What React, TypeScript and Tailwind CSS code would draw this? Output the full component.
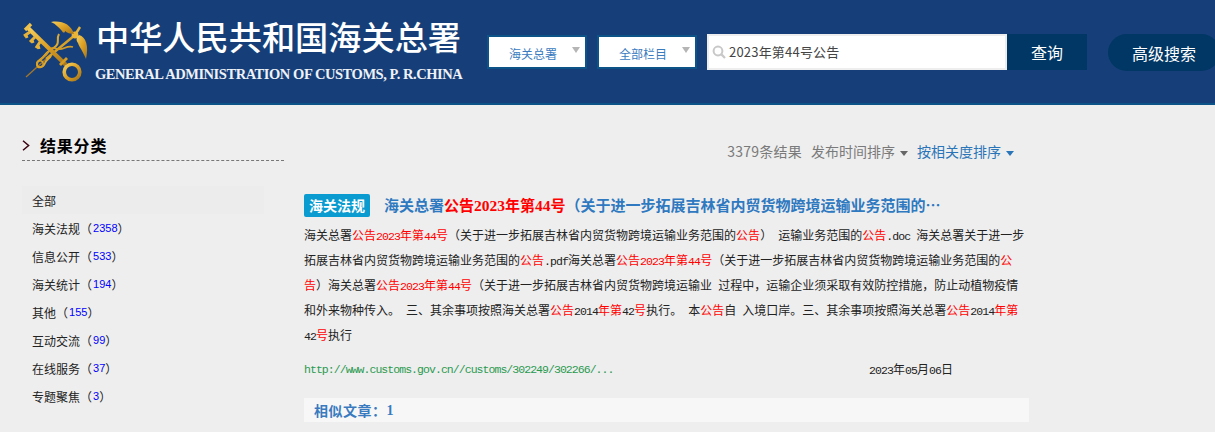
import React from "react";

const cjk = '"Noto Sans CJK SC", sans-serif';

const categories = [
  { name: "海关法规", count: "2358" },
  { name: "信息公开", count: "533" },
  { name: "海关统计", count: "194" },
  { name: "其他", count: "155" },
  { name: "互动交流", count: "99" },
  { name: "在线服务", count: "37" },
  { name: "专题聚焦", count: "3" },
];

// [text, isRed] per run, one entry per rendered line
const snippet: [string, boolean][][] = [
  [
    ["海关总署", false],
    ["公告2023年第44号", true],
    ["（关于进一步拓展吉林省内贸货物跨境运输业务范围的", false],
    ["公告", true],
    ["） 运输业务范围的", false],
    ["公告", true],
    [".doc 海关总署关于进一步", false],
  ],
  [
    ["拓展吉林省内贸货物跨境运输业务范围的", false],
    ["公告", true],
    [".pdf海关总署", false],
    ["公告2023年第44号", true],
    ["（关于进一步拓展吉林省内贸货物跨境运输业务范围的", false],
    ["公", true],
  ],
  [
    ["告", true],
    ["）海关总署", false],
    ["公告2023年第44号", true],
    ["（关于进一步拓展吉林省内贸货物跨境运输业 过程中，运输企业须采取有效防控措施，防止动植物疫情", false],
  ],
  [
    ["和外来物种传入。 三、其余事项按照海关总署", false],
    ["公告", true],
    ["2014", false],
    ["年第", true],
    ["42", false],
    ["号", true],
    ["执行。 本", false],
    ["公告", true],
    ["自 入境口岸。三、其余事项按照海关总署", false],
    ["公告", true],
    ["2014", false],
    ["年第", true],
  ],
  [
    ["42", false],
    ["号", true],
    ["执行", false],
  ],
];

// ascii runs are drawn in a narrow mono so they keep the 6px advance of the original
function Mixed({ text }: { text: string }) {
  const parts = text.split(/([\x20-\x7e]+)/).filter(Boolean);
  return (
    <>
      {parts.map((part, i) =>
        /^[\x20-\x7e]+$/.test(part) ? (
          <span
            key={i}
            className="whitespace-pre text-[11.5px] tracking-[-0.9px] font-['Liberation_Mono',monospace]"
          >
            {part}
          </span>
        ) : (
          <span key={i}>{part}</span>
        )
      )}
    </>
  );
}

function Caret({ color }: { color: string }) {
  return (
    <span
      className={`inline-block h-0 w-0 border-x-[4px] border-t-[5px] border-x-transparent ${color}`}
    />
  );
}

function KeyLogo() {
  return (
    <svg width="80" height="75" viewBox="0 0 80 75" className="shrink-0">
      <defs>
        <linearGradient id="gold" x1="0" y1="0" x2="1" y2="1">
          <stop offset="0" stopColor="#f6cf5c" />
          <stop offset="0.5" stopColor="#dca025" />
          <stop offset="1" stopColor="#a8761a" />
        </linearGradient>
      </defs>
      {/* staff */}
      <path d="M60 20 L31 44" stroke="#d9a227" strokeWidth="2.4" fill="none" />
      <path d="M31 44 L11 62" stroke="#a5762c" strokeWidth="1.3" fill="none" />
      <circle cx="60" cy="20" r="3.4" fill="#e8b53a" />
      <path d="M60 20 L65 12" stroke="#e8b53a" strokeWidth="2.4" fill="none" />
      {/* wings */}
      <path
        d="M36 7 C46 5 56 9 59 19 C55 19 52 18 50 16 C50 18 48 18 47 16 C44 13 41 9 36 7 Z"
        fill="url(#gold)"
      />
      <path
        d="M64 20 C71 22 74 31 71 44 C69 39 68 38 66 34 C65 32 64 31 63 28 C61 25 61 23 64 20 Z"
        fill="url(#gold)"
      />
      {/* snakes */}
      <path
        d="M44 19 C41 24 45 28 41 31 C37 35 32 36 29 41 C27 45 22 45 22 49 C22 54 28 53 30 48 C31 45 34 44 36 41"
        stroke="#e0aa2e"
        strokeWidth="2"
        fill="none"
      />
      <path
        d="M58 32 C52 30 48 35 44 34 C39 34 37 31 34 36 C32 40 28 42 25 45"
        stroke="#d59c25"
        strokeWidth="1.8"
        fill="none"
      />
      <circle cx="25" cy="49" r="3.2" stroke="#d9a227" strokeWidth="1.5" fill="none" />
      {/* key */}
      <path d="M13 13 L51 50" stroke="url(#gold)" strokeWidth="4.2" fill="none" />
      <path d="M10 15 L16 9" stroke="#eec04c" strokeWidth="3.4" fill="none" />
      <path
        d="M15 17 L9 21 M11 20 L12 23 M20 22 L15 27 M17 25 L18 28 M25 27 L21 33 M23 30 L24 34"
        stroke="#e5b33c"
        strokeWidth="3"
        fill="none"
      />
      <circle cx="57" cy="57" r="7.8" stroke="url(#gold)" strokeWidth="3.6" fill="none" />
      <path d="M45 50 L52 43" stroke="#d59c25" strokeWidth="2.8" fill="none" />
    </svg>
  );
}

export default function App() {
  return (
    <div
      className="h-[432px] w-[1215px] overflow-hidden bg-[#eeeeee]"
      style={{ fontFamily: cjk }}
    >
      {/* header */}
      <div className="flex h-[105px] items-start border-b-2 border-[#0c5488] bg-[#163f79]">
        <div className="ml-[15px] mt-[15px] shrink-0">
          <KeyLogo />
        </div>
        <div className="mt-[15px] w-[376px] shrink-0 text-white">
          <div className="ml-[1px] text-[33.2px] leading-[42px] font-medium whitespace-nowrap">
            中华人民共和国海关总署
          </div>
          <div className="mt-[7px] whitespace-nowrap text-[14.5px] leading-[20px] font-semibold tracking-[-0.45px] text-[#eef1f6] font-['Liberation_Serif',serif]">
            GENERAL ADMINISTRATION OF CUSTOMS, P. R.CHINA
          </div>
        </div>

        <div className="ml-[16px] mt-[34px] flex shrink-0 items-start">
          <div className="mt-[1px] flex h-[34px] w-[100px] shrink-0 items-center border-2 border-[#0c5488] bg-white pl-[20px] text-[12px] text-[#3a7bc0]">
            <span className="mt-[3px]">海关总署</span>
            <span className="ml-[15px] -mt-[4px] flex">
              <span className="inline-block h-0 w-0 border-x-[4px] border-t-[6px] border-x-transparent border-t-[#b5b5b5]" />
            </span>
          </div>
          <div className="ml-[10px] mt-[1px] flex h-[34px] w-[100px] shrink-0 items-center border-2 border-[#0c5488] bg-white pl-[20px] text-[12px] text-[#3a7bc0]">
            <span className="mt-[3px]">全部栏目</span>
            <span className="ml-[15px] -mt-[4px] flex">
              <span className="inline-block h-0 w-0 border-x-[4px] border-t-[6px] border-x-transparent border-t-[#b5b5b5]" />
            </span>
          </div>
          <div className="ml-[10px] flex h-[36px] w-[300px] shrink-0 items-center border-2 border-[#eeeeee] bg-white pl-[3px] text-[13px] tracking-[0.2px] text-[#444444]">
            <svg width="14" height="14" viewBox="0 0 14 14" fill="none" className="shrink-0">
              <circle cx="6" cy="6" r="4.4" stroke="#c8c8c8" strokeWidth="2" />
              <path d="M9.4 9.4 L13 13" stroke="#c8c8c8" strokeWidth="2.2" />
            </svg>
            <span className="ml-[3px]">2023年第44号公告</span>
          </div>
          <div className="flex h-[36px] w-[80px] shrink-0 items-center justify-center bg-[#003764] text-[16px] text-white">
            查询
          </div>
          <div className="ml-[21px] flex h-[37px] shrink-0 items-center rounded-full bg-[#003764] px-[24px] text-[16px] text-white">
            高级搜索
          </div>
        </div>
      </div>

      <div className="flex">
        {/* sidebar */}
        <div className="ml-[22px] w-[262px] shrink-0">
          <div className="mt-[26px] flex h-[30px] items-center border-b border-dashed border-[#777777]">
            <svg width="8" height="11" viewBox="0 0 8 11" fill="none" className="shrink-0">
              <path d="M1 0.8 L6.6 5.5 L1 10.2" stroke="#3a0210" strokeWidth="1.5" />
            </svg>
            <span className="ml-[10px] -mt-[1px] text-[16px] font-bold tracking-[0.8px] text-black">
              结果分类
            </span>
          </div>
          <div className="mt-[25px] w-[242px] text-[12px] text-[#222222]">
            <div className="flex h-[28px] items-center bg-[#ececec] pl-[10px] pt-[1px]">全部</div>
            {categories.map((c) => (
              <div key={c.name} className="flex h-[28px] items-center pl-[10px] pt-[1px]">
                {c.name}（
                <span className="ml-[1px] text-[#0000ff] font-['Liberation_Sans',sans-serif] text-[11px]">
                  {c.count}
                </span>
                ）
              </div>
            ))}
          </div>
        </div>

        {/* results */}
        <div className="ml-[20px] w-[725px] shrink-0">
          <div className="mt-[35px] flex h-[22px] items-center justify-end pr-[15px] text-[14px]">
            <span className="tracking-[0.25px] text-[#7a7a7a]">3379条结果</span>
            <span className="ml-[9px] text-[#7a7a7a]">发布时间排序</span>
            <span className="ml-[5px] mt-[4px] flex">
              <Caret color="border-t-[#666666]" />
            </span>
            <span className="ml-[9px] text-[#2a75b8]">按相关度排序</span>
            <span className="ml-[5px] mt-[4px] flex">
              <Caret color="border-t-[#2a75b8]" />
            </span>
          </div>

          <div className="mt-[32px] flex h-[23px] items-center">
            <span className="flex h-[23px] w-[66px] shrink-0 items-center justify-center rounded-[2px] bg-[#0a9bd0] text-[14px] font-bold text-white">
              海关法规
            </span>
            <span className="ml-[14px] whitespace-nowrap text-[15px] font-bold text-[#2e79c0]">
              海关总署
              <span className="text-[#ff0000]">
                公告<span className="text-[15.5px] font-['Liberation_Serif',serif]">2023</span>年第
                <span className="text-[15.5px] font-['Liberation_Serif',serif]">44</span>号
              </span>
              （关于进一步拓展吉林省内贸货物跨境运输业务范围的…
            </span>
          </div>

          <div className="mt-[5px] text-[12px] leading-[25px] text-[#222222]">
            {snippet.map((line, i) => (
              <div key={i} className="h-[25px] whitespace-nowrap">
                {line.map(([text, red], j) => (
                  <span key={j} className={red ? "text-[#ff0000]" : undefined}>
                    <Mixed text={text} />
                  </span>
                ))}
              </div>
            ))}
          </div>

          <div className="mt-[13px] flex h-[20px] items-center">
            <span className="w-[565px] shrink-0 whitespace-pre text-[11.5px] tracking-[-0.95px] text-[#2a9a50] font-['Liberation_Mono',monospace]">
              http://www.customs.gov.cn//customs/302249/302266/...
            </span>
            <span className="whitespace-nowrap text-[12px] text-[#222222]">
              <Mixed text="2023" />年<Mixed text="05" />月<Mixed text="06" />日
            </span>
          </div>

          <div className="mt-[18px] flex h-[24px] items-center bg-[#f7f7f7] pl-[10px] text-[14px] font-bold tracking-[0.5px] text-[#3a7bc0]">
            相似文章：<span className="font-['Liberation_Serif',serif]">1</span>
          </div>
        </div>
      </div>
    </div>
  );
}
